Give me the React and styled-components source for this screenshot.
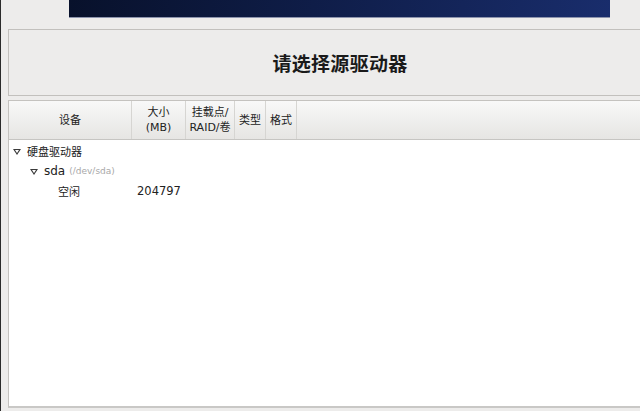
import React from 'react';
import styled, { createGlobalStyle } from 'styled-components';

const GlobalStyle = createGlobalStyle`
  html, body {
    margin: 0;
    padding: 0;
    overflow: hidden;
  }
  body {
    font-family: "DejaVu Sans", "Noto Sans CJK SC", sans-serif;
  }
`;

const Page = styled.div`
  width: 640px;
  height: 411px;
  box-sizing: border-box;
  background: #edeceb;
  border-left: 1px solid #2b2b2b;
  display: flex;
  flex-direction: column;
  overflow: hidden;
`;

const Banner = styled.div`
  margin-left: 68px;
  width: 541px;
  height: 17px;
  flex: none;
  background: linear-gradient(100deg, #08112b 0%, #0f1d48 45%, #192d6c 100%);
  border-bottom: 1px solid #8d94ad;
`;

const TitleFrame = styled.div`
  margin: 11px 0 0 7px;
  width: 664px;
  height: 67px;
  flex: none;
  box-sizing: border-box;
  border: 1px solid #c2c0bd;
  display: flex;
  align-items: center;
  justify-content: center;
`;

const Title = styled.h1`
  margin: 0;
  font-size: 19px;
  font-weight: bold;
  color: #1a1a1a;
  letter-spacing: 0.3px;
`;

const Table = styled.div`
  margin: 4px 0 0 7px;
  width: 664px;
  height: 308px;
  flex: none;
  box-sizing: border-box;
  border: 1px solid #c4c2bf;
  border-bottom: 2px solid #c9c8c6;
  background: #fff;
  display: flex;
  flex-direction: column;
`;

const HeaderRow = styled.div`
  display: flex;
  height: 39px;
  flex: none;
  box-sizing: border-box;
  background: linear-gradient(#f8f8f8, #e6e5e3);
  border-bottom: 1px solid #c6c5c2;
`;

const HeaderCell = styled.div`
  width: ${p => p.$w}px;
  flex: none;
  box-sizing: border-box;
  border-right: 1px solid #d6d5d2;
  display: flex;
  align-items: center;
  justify-content: center;
  text-align: center;
  font-size: 11px;
  line-height: 15px;
  color: #222;
`;

const HeaderFill = styled.div`
  flex: 1;
`;

const Row = styled.div`
  display: flex;
  align-items: center;
  height: 20px;
  padding-left: ${p => p.$indent}px;
  font-size: 11px;
  color: #222;
`;

const Expander = styled.span`
  width: 0;
  height: 0;
  border-left: 4px solid transparent;
  border-right: 4px solid transparent;
  border-top: 6px solid #3a3a3a;
  margin-right: 6px;
  position: relative;
  top: 1px;
  &::after {
    content: '';
    position: absolute;
    left: -2px;
    top: -5px;
    border-left: 2px solid transparent;
    border-right: 2px solid transparent;
    border-top: 3px solid #fff;
  }
`;

const DiskName = styled.span`
  font-size: 12px;
  color: #222;
`;

const DevPath = styled.span`
  font-size: 9px;
  color: #a8a8a8;
  margin-left: 4px;
`;

const FreeLabel = styled.span`
  width: 79px;
`;

const Size = styled.span`
  font-size: 11.5px;
`;

const columns = [
  { w: 123, label: '设备' },
  { w: 54, label: <>大小<br />(MB)</> },
  { w: 49, label: <>挂载点/<br />RAID/卷</> },
  { w: 31, label: '类型' },
  { w: 31, label: '格式' },
];

export default function App() {
  return (
    <>
      <GlobalStyle />
      <Page>
        <Banner />
        <TitleFrame>
          <Title>请选择源驱动器</Title>
        </TitleFrame>
        <Table>
          <HeaderRow>
            {columns.map((c, i) => (
              <HeaderCell key={i} $w={c.w}>{c.label}</HeaderCell>
            ))}
            <HeaderFill />
          </HeaderRow>
          <Row $indent={4} style={{ marginTop: 1 }}>
            <Expander />
            <span>硬盘驱动器</span>
          </Row>
          <Row $indent={21}>
            <Expander />
            <DiskName>sda</DiskName>
            <DevPath>(/dev/sda)</DevPath>
          </Row>
          <Row $indent={49}>
            <FreeLabel>空闲</FreeLabel>
            <Size>204797</Size>
          </Row>
        </Table>
      </Page>
    </>
  );
}
